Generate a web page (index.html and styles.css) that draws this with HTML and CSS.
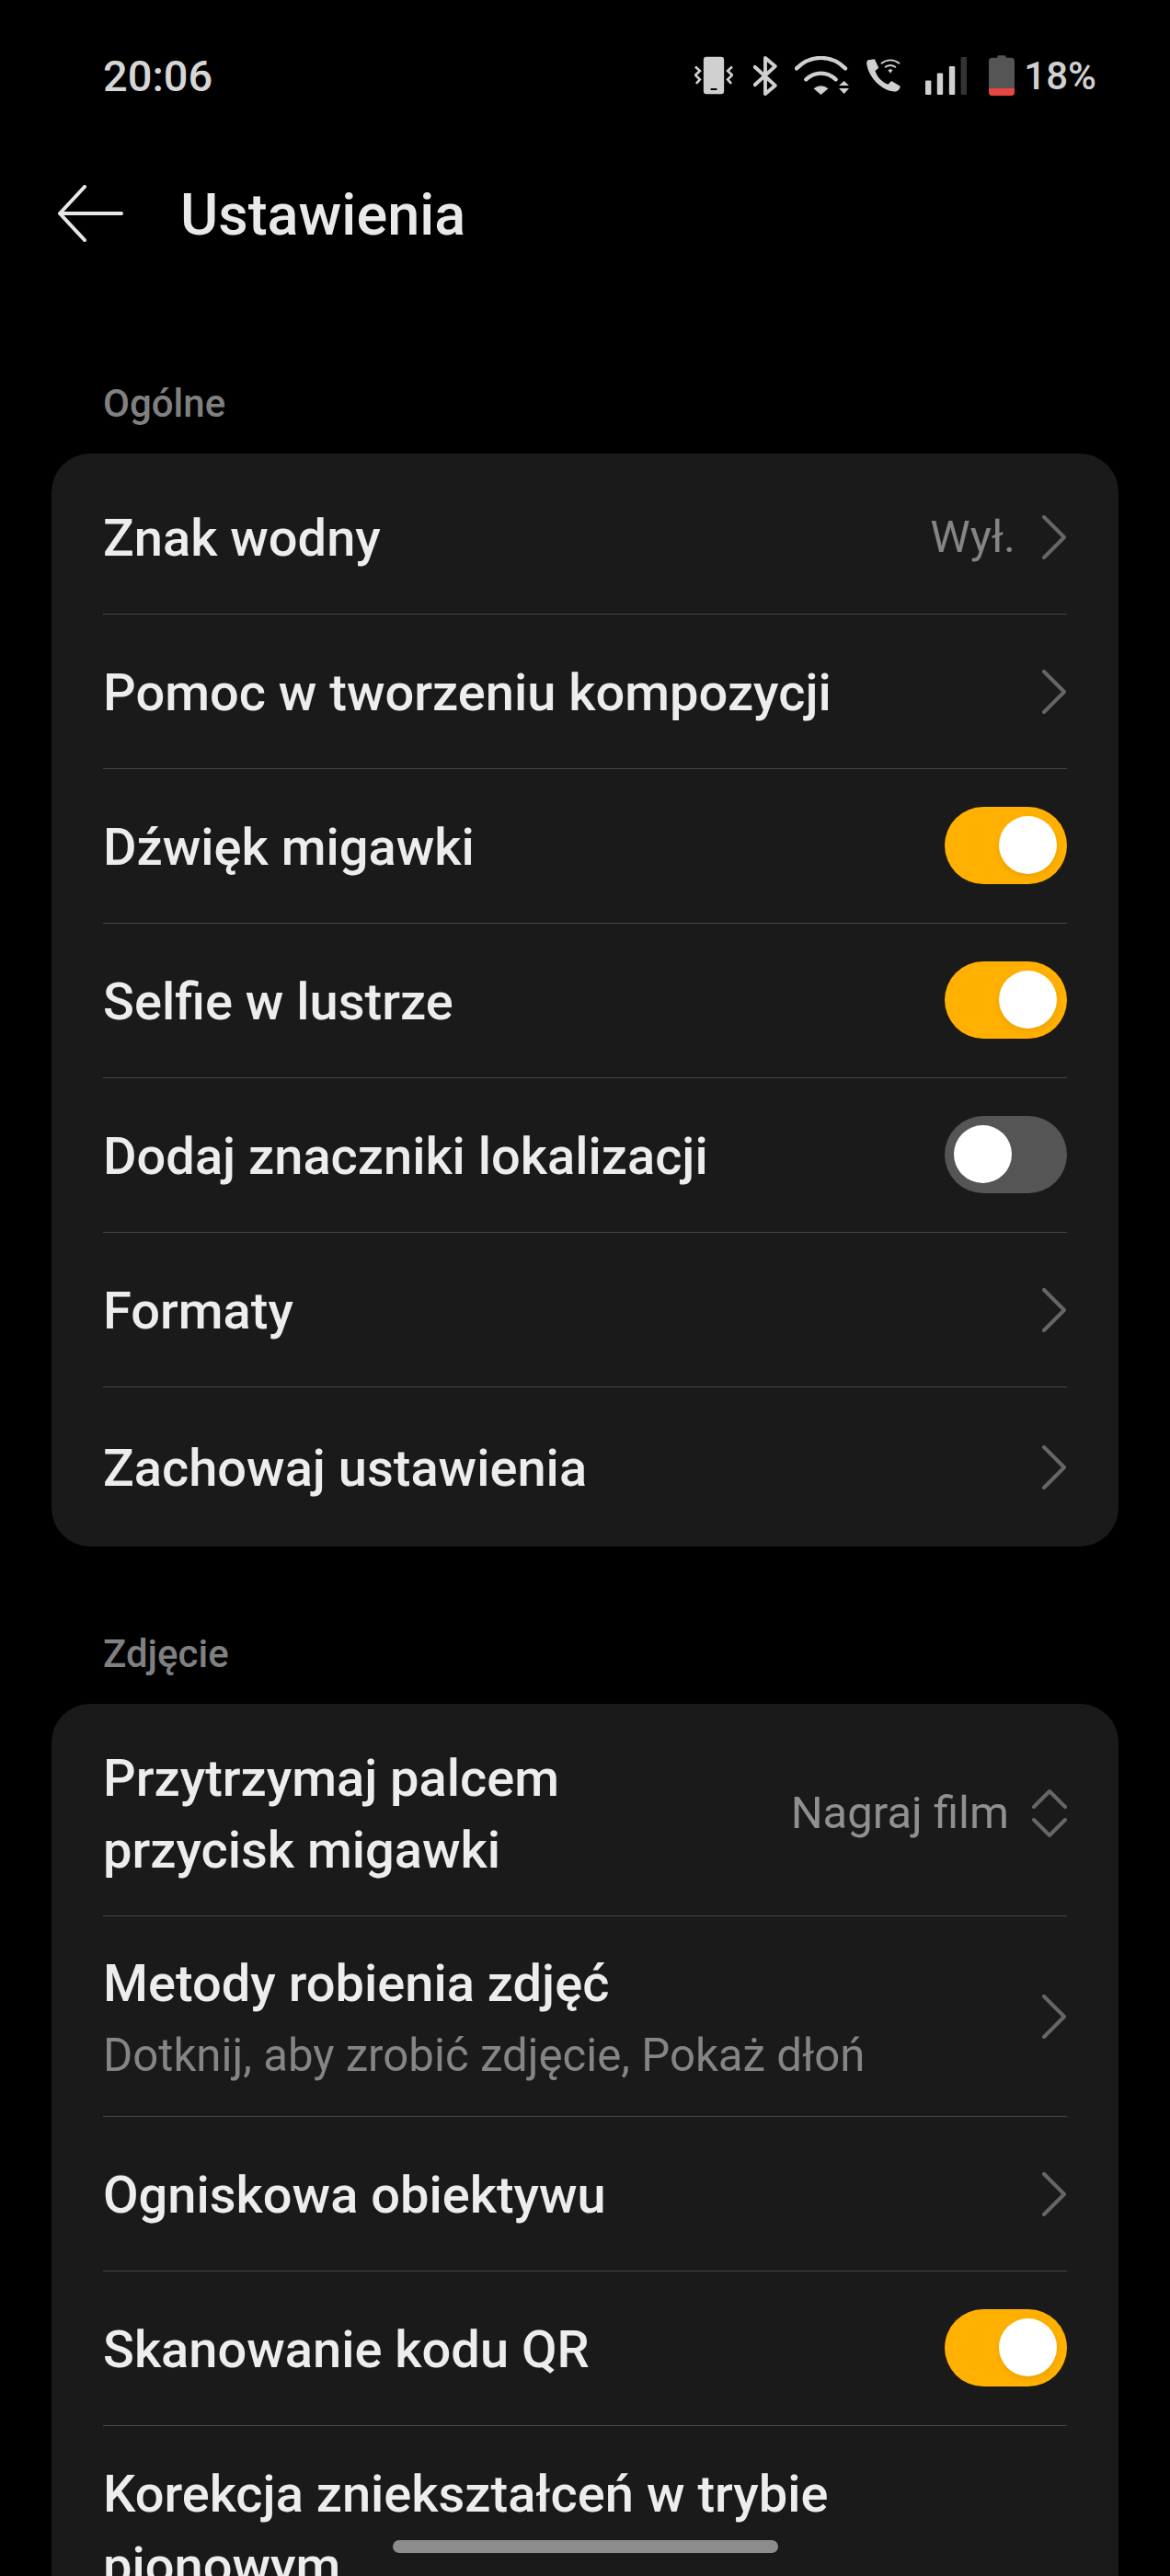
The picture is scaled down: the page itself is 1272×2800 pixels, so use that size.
FILE: index.html
```html
<!DOCTYPE html>
<html lang="pl">
<head>
    <meta charset="UTF-8" />
    <meta name="viewport" content="width=device-width, initial-scale=1" />
    <title>Ustawienia</title>
    <link rel="stylesheet" href="styles.css">
</head>
<body>
<div class="screen">

    <div class="status-bar">
        <span class="time">20:06</span>
        <div class="status-icons">
            <!-- vibrate -->
            <svg class="ic-vibrate" viewBox="0 0 128 126" fill="none">
                <rect x="30" y="1" width="68" height="124" rx="10" fill="#d0d0d0"/>
                <rect x="53" y="106" width="22" height="6" rx="3" fill="#000"/>
                <path d="M3 34l15 14-15 14 15 14-12 14" stroke="#d0d0d0" stroke-width="8"/>
                <path d="M125 34l-15 14 15 14-15 14 12 14" stroke="#d0d0d0" stroke-width="8"/>
            </svg>
            <!-- bluetooth -->
            <svg class="ic-bt" viewBox="0 0 80 130" fill="none">
                <path d="M5 35l68 62-33 28V5l33 28-68 62" stroke="#d0d0d0" stroke-width="12" stroke-linejoin="round" stroke-linecap="round"/>
            </svg>
            <!-- wifi -->
            <svg class="ic-wifi" viewBox="0 0 178 126" fill="none">
                <path d="M6 40C52-6 120-6 166 40" stroke="#d0d0d0" stroke-width="13" stroke-linecap="round"/>
                <path d="M37 76c30-27 68-27 98 0" stroke="#d0d0d0" stroke-width="13" stroke-linecap="round"/>
                <path d="M62 106q24-18 48 0l-24 20z" fill="#d0d0d0"/>
                <path d="M145 96l17-15 16 15zM145 105h33l-16 18z" fill="#d0d0d0"/>
            </svg>
            <!-- wifi call -->
            <svg class="ic-call" viewBox="0 0 120 114" fill="none">
                <path d="M6 4l22-3 14 30-12 10c6 20 24 40 44 47l12-12 30 18c0 10-10 20-22 18C50 108 6 60 1 18 0 10 2 6 6 4z" fill="#d0d0d0"/>
                <path d="M52 15c18-14 42-14 60 0" stroke="#d0d0d0" stroke-width="6" stroke-linecap="round"/>
                <path d="M65 28c10-7 24-7 34 0" stroke="#d0d0d0" stroke-width="6" stroke-linecap="round"/>
                <path d="M74 39l8-4 8 4-8 10z" fill="#d0d0d0"/>
            </svg>
            <!-- signal -->
            <svg class="ic-signal" viewBox="0 0 134 122">
                <rect x="0" y="76" width="19" height="46" rx="3" fill="#d0d0d0"/>
                <rect x="38" y="52" width="19" height="70" rx="3" fill="#d0d0d0"/>
                <rect x="77" y="30" width="19" height="92" rx="3" fill="#d0d0d0"/>
                <rect x="115" y="0" width="19" height="122" rx="3" fill="#333"/>
            </svg>
            <!-- battery -->
            <svg class="ic-battery" viewBox="0 0 84 132">
                <path d="M28 8V5q0-4 4-4h20q4 0 4 4v3h16q12 0 12 12v100q0 12-12 12H12q-12 0-12-12V20Q0 8 12 8z" fill="#555"/>
                <path d="M0 108h84v12q0 12-12 12H12q-12 0-12-12z" fill="#e8463f"/>
            </svg>
            <span class="battery-pct">18%</span>
        </div>
    </div>

    <header class="title-bar">
        <svg class="back-arrow" viewBox="0 0 72 62" fill="none">
            <path d="M70 31H3M30 2L3 31l27 29" stroke="#e8e8e8" stroke-width="4" stroke-linecap="round" stroke-linejoin="round"/>
        </svg>
        <h1>Ustawienia</h1>
    </header>

    <h2 class="section-label first">Ogólne</h2>
    <section class="card">
        <div class="row"><span class="row-title">Znak wodny</span><span class="row-value">Wył.</span><svg class="chevron" viewBox="0 0 26 48" fill="none"><path d="M2 2l22 22L2 46"/></svg></div>
        <div class="row"><span class="row-title">Pomoc w tworzeniu kompozycji</span><svg class="chevron" viewBox="0 0 26 48" fill="none"><path d="M2 2l22 22L2 46"/></svg></div>
        <div class="row"><span class="row-title">Dźwięk migawki</span><span class="toggle on"></span></div>
        <div class="row"><span class="row-title">Selfie w lustrze</span><span class="toggle on"></span></div>
        <div class="row"><span class="row-title">Dodaj znaczniki lokalizacji</span><span class="toggle"></span></div>
        <div class="row"><span class="row-title">Formaty</span><svg class="chevron" viewBox="0 0 26 48" fill="none"><path d="M2 2l22 22L2 46"/></svg></div>
        <div class="row last"><span class="row-title">Zachowaj ustawienia</span><svg class="chevron" viewBox="0 0 26 48" fill="none"><path d="M2 2l22 22L2 46"/></svg></div>
    </section>

    <h2 class="section-label">Zdjęcie</h2>
    <section class="card">
        <div class="row tall"><span class="row-title">Przytrzymaj palcem<br>przycisk migawki</span><span class="row-value light">Nagraj film</span><svg class="updown" viewBox="0 0 38 54" fill="none"><path d="M2 20L19 3l17 17M2 34l17 17 17-17"/></svg></div>
        <div class="row sub"><div class="row-text"><span class="row-title">Metody robienia zdjęć</span><span class="row-sub">Dotknij, aby zrobić zdjęcie, Pokaż dłoń</span></div><svg class="chevron" viewBox="0 0 26 48" fill="none"><path d="M2 2l22 22L2 46"/></svg></div>
        <div class="row"><span class="row-title">Ogniskowa obiektywu</span><svg class="chevron" viewBox="0 0 26 48" fill="none"><path d="M2 2l22 22L2 46"/></svg></div>
        <div class="row"><span class="row-title">Skanowanie kodu QR</span><span class="toggle on"></span></div>
        <div class="row tall last"><span class="row-title">Korekcja zniekształceń w trybie<br>pionowym</span></div>
    </section>

    <div class="home-bar"></div>
</div>
</body>
</html>
```

FILE: styles.css
```css
html, body {
    margin: 0;
    background-color: #000;
}

.screen {
    position: relative;
    width: 1272px;
    height: 2800px;
    overflow: hidden;
    background-color: #000;
    font-family: 'Roboto', sans-serif;
    color: #e9e9e9;
}

/* status bar */
.status-bar {
    display: flex;
    align-items: center;
    justify-content: space-between;
    height: 54px;
    padding: 55px 80px 0 112px;
}

.time {
    font-size: 47px;
    font-weight: 500;
    color: #d6d6d6;
}

.status-icons {
    display: flex;
    align-items: center;
}

.status-icons svg {
    display: block;
    flex: none;
}

.ic-vibrate { width: 42px; height: 42px; margin-right: 22px; }
.ic-bt { width: 26px; height: 43px; margin-right: 19px; }
.ic-wifi { width: 59px; height: 42px; margin-right: 19px; }
.ic-call { width: 38px; height: 38px; margin-right: 26px; }
.ic-signal { width: 45px; height: 41px; margin-right: 24px; }
.ic-battery { width: 28px; height: 44px; margin-right: 10px; }

.battery-pct {
    font-size: 42px;
    font-weight: 500;
    color: #d0d0d0;
}

/* title */
.title-bar {
    display: flex;
    align-items: center;
    height: 90px;
    margin-top: 78px;
    padding-left: 62px;
}

.back-arrow {
    width: 72px;
    height: 62px;
    margin-right: 62px;
}

.title-bar h1 {
    margin: 0;
    padding-top: 3px;
    font-size: 63px;
    font-weight: 500;
    color: #e9e9e9;
}

.section-label {
    margin: 0;
    padding: 29px 0 0 112px;
    height: 52px;
    line-height: 52px;
    font-size: 42px;
    font-weight: 500;
    color: #808080;
}

.section-label.first {
    margin-top: 107px;
}

/* cards */
.card {
    margin: 28px 56px 0;
    padding: 7px 56px 0;
    background-color: #1a1a1a;
    border-radius: 42px;
}

.card + .section-label {
    margin-top: 62px;
}

.row {
    display: flex;
    align-items: center;
    height: 167px;
    border-bottom: 1px solid #454545;
}

.row.last {
    height: 173px;
    border-bottom: none;
}

.row.tall {
    height: 223px;
}

.row.sub {
    height: 217px;
}

.row-title {
    display: block;
    flex: 1;
    padding-top: 3px;
    font-size: 56px;
    line-height: 78px;
    font-weight: 500;
    color: #ededed;
}

.row-text {
    flex: 1;
    padding-top: 4px;
}

.row-sub {
    display: block;
    font-size: 49.2px;
    line-height: 78px;
    color: #858585;
}

.row-value {
    font-size: 49px;
    color: #858585;
    margin-right: 29px;
}

.row-value.light {
    color: #909090;
    margin-right: 25px;
}

.chevron {
    width: 26px;
    height: 48px;
    margin-right: 1px;
}

.chevron path,
.updown path {
    stroke: #666;
    stroke-width: 4;
    stroke-linecap: round;
    stroke-linejoin: round;
}

.updown {
    width: 38px;
    height: 54px;
}

/* switches */
.toggle {
    position: relative;
    flex: none;
    width: 133px;
    height: 84px;
    margin-bottom: 1px;
    border-radius: 42px;
    background-color: #555;
}

.toggle::after {
    content: "";
    position: absolute;
    top: 10px;
    left: 10px;
    width: 63px;
    height: 63px;
    border-radius: 50%;
    background-color: #fff;
}

.toggle.on {
    background-color: #ffb000;
}

.toggle.on::after {
    left: 59px;
    box-shadow: 0 3px 6px rgba(0, 0, 0, 0.08);
}

.home-bar {
    position: absolute;
    left: 427px;
    top: 2761px;
    width: 419px;
    height: 14px;
    border-radius: 7px;
    background-color: #8c8c8c;
}
```
